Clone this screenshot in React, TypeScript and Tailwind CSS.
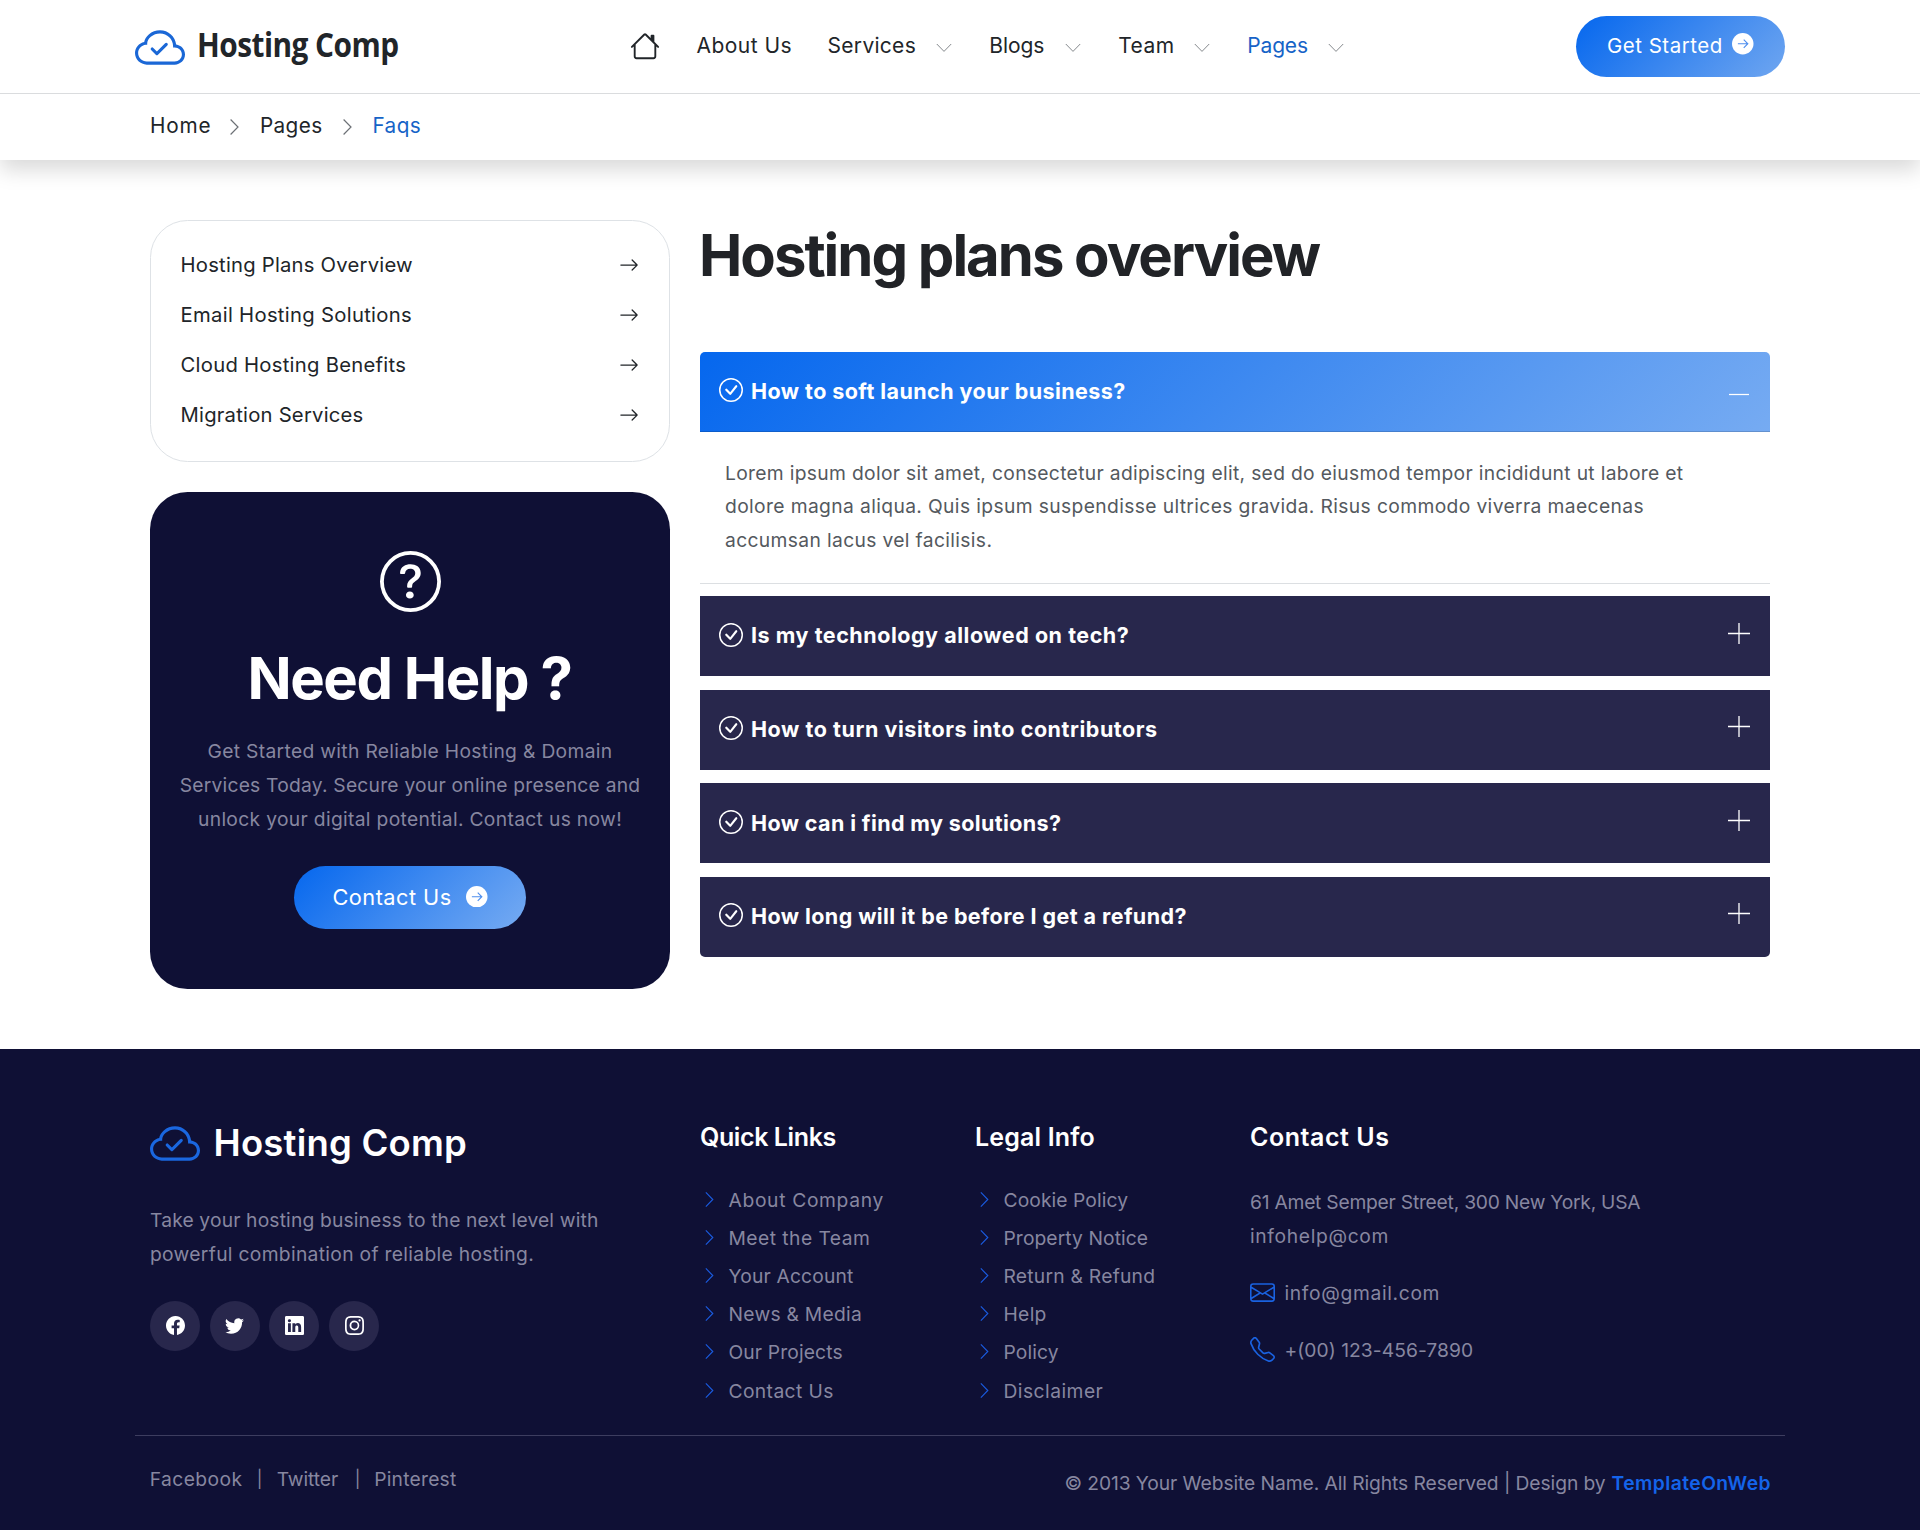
import React from 'react';
import {
  BsArrowRight,
  BsCheckCircle,
  BsCloudCheck,
  BsEnvelope,
  BsFacebook,
  BsHouse,
  BsInstagram,
  BsLinkedin,
  BsQuestionCircle,
  BsTelephone,
  BsTwitter,
} from 'react-icons/bs';

type Label = { text: string; track: string };

function ChevronDown() {
  return (
    <svg className="mt-[3px] h-[18px] w-[18px] shrink-0" viewBox="0 0 18 18" fill="none" stroke="#85898d" strokeWidth="1">
      <path d="M1.8 5 9 12.4 16.2 5" />
    </svg>
  );
}

function ChevronRight({ className }: { className: string }) {
  return (
    <svg className={className} viewBox="0 0 9 16" fill="none" stroke="currentColor" strokeWidth="1.2">
      <path d="M.6.5 8 8 .6 15.5" />
    </svg>
  );
}

function ArrowBadge({ className }: { className: string }) {
  return (
    <svg className={`size-[21.5px] shrink-0 ${className}`} viewBox="0 0 22 22" fill="none">
      <circle cx="11" cy="11" r="11" fill="#fff" />
      <path d="M6 11h10M12 6.8l4.2 4.2-4.2 4.2" stroke="#4f8fee" strokeWidth="1.15" />
    </svg>
  );
}

const menus: (Label & { width: string })[] = [
  { text: 'Services', track: 'tracking-[0.28px]', width: 'w-[125.2px] text-[#212529]' },
  { text: 'Blogs', track: 'tracking-[-0.07px]', width: 'w-[92.5px] text-[#212529]' },
  { text: 'Team', track: 'tracking-[0.4px]', width: 'w-[92.5px] text-[#212529]' },
  { text: 'Pages', track: 'tracking-[-0.17px]', width: 'w-[97.5px] text-[#1663c7]' },
];

function Header() {
  return (
    <header className="relative shadow-[0_10px_20px_rgba(0,0,0,0.15)]">
      <div className="flex h-[94px] items-center border-b border-[#dadcde] px-[135px] pb-px">
        <div className="flex w-[495px] items-center">
          <BsCloudCheck className="mt-[6px] size-[50px] text-[#1a67d6]" />
          <span className="mb-[4px] ml-[11.5px] inline-block origin-left scale-x-[0.877] whitespace-nowrap font-['Open_Sans',sans-serif] text-[34px] leading-[50px] font-bold tracking-[-0.6px] text-[#212529]">
            Hosting Comp
          </span>
        </div>
        <nav className="flex items-center gap-[36.5px] text-[21px]">
          <BsHouse className="mb-px size-[30px] text-[#212529]" />
          <span className="w-[94.6px] whitespace-nowrap tracking-[0.47px] text-[#212529]">About Us</span>
          {menus.map((m) => (
            <span key={m.text} className={`flex items-center justify-between ${m.width}`}>
              <span className={m.track}>{m.text}</span>
              <ChevronDown />
            </span>
          ))}
        </nav>
        <button className="ml-auto flex h-[61px] w-[209px] items-center justify-between rounded-full bg-linear-[135deg,#0567ee,#6fa6f0] pr-[31.5px] pl-[31px] text-[20.5px] text-white">
          <span className="whitespace-nowrap tracking-[0.5px]">Get Started</span>
          <ArrowBadge className="mb-[4px]" />
        </button>
      </div>
      <div className="flex h-[66px] items-center gap-[20.5px] pb-[2px] pl-[149.9px] text-[20.75px] text-[#212529]">
        <span className="w-[60px] tracking-[0.85px]">Home</span>
        <ChevronRight className="mt-[2px] h-4 w-[9px] text-[#6c7075]" />
        <span className="w-[62.5px] tracking-[0.38px]">Pages</span>
        <ChevronRight className="mt-[2px] h-4 w-[9px] text-[#6c7075]" />
        <span className="tracking-[0.42px] text-[#1663c7]">Faqs</span>
      </div>
    </header>
  );
}

const topics: Label[] = [
  { text: 'Hosting Plans Overview', track: 'tracking-[0.22px]' },
  { text: 'Email Hosting Solutions', track: 'tracking-[0.3px]' },
  { text: 'Cloud Hosting Benefits', track: 'tracking-[0.27px]' },
  { text: 'Migration Services', track: 'tracking-[0.22px]' },
];

function Sidebar() {
  return (
    <aside className="flex w-[520px] flex-col gap-[30px]">
      <ul className="flex h-[242px] flex-col rounded-[37.5px] border border-[#dee2e6] pt-[19.5px] pr-[30px] pl-[29.5px] text-[20.25px] text-[#212529]">
        {topics.map((t) => (
          <li key={t.text} className="flex h-[50px] items-center justify-between">
            <span className={t.track}>{t.text}</span>
            <BsArrowRight className="mb-[2px] size-5" />
          </li>
        ))}
      </ul>
      <section className="flex h-[497px] flex-col items-center rounded-[37.5px] bg-[#0f1035] pt-[59px] text-center">
        <BsQuestionCircle className="size-[61px] text-white" />
        <h2 className="mt-[28.5px] pr-px text-[58px] leading-[75px] font-bold tracking-[-1.45px] text-white">Need Help ?</h2>
        <p className="mt-[19.5px] flex flex-col text-[19.25px] leading-[33.75px] whitespace-nowrap text-[#8787a0]">
          <span className="tracking-[0.32px]">Get Started with Reliable Hosting &amp; Domain</span>
          <span className="tracking-[0.22px]">Services Today. Secure your online presence and</span>
          <span className="tracking-[0.32px]">unlock your digital potential. Contact us now!</span>
        </p>
        <button className="mt-[29.5px] flex h-[63px] w-[232px] items-center justify-between rounded-full bg-linear-[135deg,#0567ee,#76abf2] pr-[38.5px] pl-[38.5px] text-[21.75px] text-white">
          <span className="mt-px tracking-[0.46px]">Contact Us</span>
          <ArrowBadge className="mb-[2px]" />
        </button>
      </section>
    </aside>
  );
}

const answer: Label[] = [
  {
    text: 'Lorem ipsum dolor sit amet, consectetur adipiscing elit, sed do eiusmod tempor incididunt ut labore et',
    track: 'tracking-[0.32px]',
  },
  {
    text: 'dolore magna aliqua. Quis ipsum suspendisse ultrices gravida. Risus commodo viverra maecenas',
    track: 'tracking-[0.37px]',
  },
  { text: 'accumsan lacus vel facilisis.', track: 'tracking-[0.35px]' },
];

const questions: Label[] = [
  { text: 'Is my technology allowed on tech?', track: 'tracking-[0.53px]' },
  { text: 'How to turn visitors into contributors', track: 'tracking-[0.55px]' },
  { text: 'How can i find my solutions?', track: 'tracking-[0.38px]' },
  { text: 'How long will it be before I get a refund?', track: 'tracking-[0.42px]' },
];

function Accordion() {
  return (
    <div className="mt-[62px] text-[21.5px] font-bold text-white">
      <div className="flex h-[80px] items-center rounded-t-[5px] border-b border-black/15 bg-linear-[135deg,#0567ee,#76abf2] bg-origin-border pr-[20px] pb-px pl-[18.5px]">
        <BsCheckCircle className="mb-[2px] size-6" />
        <span className="ml-[8.5px] tracking-[0.43px]">How to soft launch your business?</span>
        <svg className="mt-[5px] ml-auto size-[22px]" viewBox="0 0 22 22" stroke="currentColor" strokeWidth="1.25">
          <path d="M1 11.5h20" />
        </svg>
      </div>
      <div className="flex h-[151.5px] flex-col border-b border-[#dcdfe2] pt-[24.5px] pl-[25px] text-[19.25px] leading-[33.75px] font-normal whitespace-nowrap text-[#54595e]">
        {answer.map((l) => (
          <span key={l.text} className={l.track}>
            {l.text}
          </span>
        ))}
      </div>
      <div className="mt-[12.5px] flex flex-col gap-[13.65px]">
        {questions.map((q) => (
          <div key={q.text} className="flex h-[80px] items-center bg-[#28274c] pr-[20px] pb-px pl-[18.5px] last:rounded-b-[5px]">
            <BsCheckCircle className="mb-[2px] size-6" />
            <span className={`ml-[8.5px] ${q.track}`}>{q.text}</span>
            <svg className="mb-[4px] ml-auto size-[22px]" viewBox="0 0 22 22" stroke="currentColor" strokeWidth="1.3">
              <path d="M0 10.5h22M11 0v21" />
            </svg>
          </div>
        ))}
      </div>
    </div>
  );
}

const quickLinks: Label[] = [
  { text: 'About Company', track: 'tracking-[0.66px]' },
  { text: 'Meet the Team', track: 'tracking-[0.45px]' },
  { text: 'Your Account', track: 'tracking-[0.16px]' },
  { text: 'News & Media', track: 'tracking-[0.26px]' },
  { text: 'Our Projects', track: 'tracking-[0.13px]' },
  { text: 'Contact Us', track: 'tracking-[0.38px]' },
];

const legalLinks: Label[] = [
  { text: 'Cookie Policy', track: 'tracking-[0.08px]' },
  { text: 'Property Notice', track: 'tracking-[0.08px]' },
  { text: 'Return & Refund', track: 'tracking-[0.24px]' },
  { text: 'Help', track: 'tracking-[0.3px]' },
  { text: 'Policy', track: 'tracking-[0.12px]' },
  { text: 'Disclaimer', track: 'tracking-[0.46px]' },
];

function LinkColumn({ title, titleTrack, links }: { title: string; titleTrack: string; links: Label[] }) {
  return (
    <div>
      <h3 className={`text-[25px] leading-[35px] font-semibold text-white ${titleTrack}`}>{title}</h3>
      <ul className="mt-[25.5px]">
        {links.map((l) => (
          <li key={l.text} className="flex h-[38.2px] items-center pl-[5px]">
            <ChevronRight className="mb-px h-[15px] w-[9px] text-[#1a5be0]" />
            <span className={`mt-px ml-[14.5px] ${l.track}`}>{l.text}</span>
          </li>
        ))}
      </ul>
    </div>
  );
}

const socials = [BsFacebook, BsTwitter, BsLinkedin, BsInstagram];

function Footer() {
  return (
    <footer className="mt-[60px] h-[481px] bg-[#0f1035] px-[135px] pt-[71px] text-[19.25px] text-[#8787a0]">
      <div className="grid h-[315.5px] grid-cols-[550px_275px_275px_1fr] border-b border-[#3d3d5f] pl-[15px]">
        <div>
          <div className="flex h-[50px] items-center">
            <BsCloudCheck className="size-[50px] text-[#1a67e0]" />
            <span className="mb-[3px] ml-[13.5px] text-[36.5px] font-semibold tracking-[0.2px] text-white">Hosting Comp</span>
          </div>
          <p className="mt-[34px] flex flex-col leading-[33.75px]">
            <span className="tracking-[0.15px]">Take your hosting business to the next level with</span>
            <span className="tracking-[0.31px]">powerful combination of reliable hosting.</span>
          </p>
          <div className="mt-[29.5px] flex gap-[9.7px]">
            {socials.map((Icon, i) => (
              <span key={i} className="flex size-[50px] items-center justify-center rounded-full bg-[#28274c] pb-[2px] text-white">
                <Icon className="size-[19px]" />
              </span>
            ))}
          </div>
        </div>
        <LinkColumn title="Quick Links" titleTrack="tracking-[-0.4px]" links={quickLinks} />
        <LinkColumn title="Legal Info" titleTrack="tracking-[0.17px]" links={legalLinks} />
        <div className="whitespace-nowrap">
          <h3 className="text-[25px] leading-[35px] font-semibold tracking-[0.55px] text-white">Contact Us</h3>
          <p className="mt-[31px] flex flex-col leading-[33.75px]">
            <span className="tracking-[-0.24px]">61 Amet Semper Street, 300 New York, USA</span>
            <span className="tracking-[0.65px]">infohelp@com</span>
          </p>
          <div className="mt-[22px] flex h-[34px] items-center">
            <BsEnvelope className="size-[25px] text-[#1a62e0]" />
            <span className="mt-px ml-[9.5px] tracking-[0.65px]">info@gmail.com</span>
          </div>
          <div className="mt-[23px] flex h-[34px] items-center">
            <BsTelephone className="mb-px size-[25px] text-[#1a62e0]" />
            <span className="mt-px ml-[9.5px] tracking-[0.04px]">+(00) 123-456-7890</span>
          </div>
        </div>
      </div>
      <div className="flex justify-between pr-[15px] pl-[14.7px] leading-[34px]">
        <div className="flex pt-[26px]">
          <span className="w-[104px] tracking-[0.42px]">Facebook</span>
          <span className="w-[23px] pl-[3px] text-[17px]">|</span>
          <span className="w-[75px] tracking-[-0.08px]">Twitter</span>
          <span className="w-[22.5px] pl-[3px] text-[17px]">|</span>
          <span className="tracking-[0.23px]">Pinterest</span>
        </div>
        <div className="flex pt-[30px]">
          <span className="tracking-[-0.08px]">© 2013 Your Website Name. All Rights Reserved | Design by</span>
          <span className="-mr-px ml-[6px] font-semibold tracking-[0.44px] text-[#1464ea]">TemplateOnWeb</span>
        </div>
      </div>
    </footer>
  );
}

export default function App() {
  return (
    <div className="h-[1530px] w-[1920px] overflow-hidden bg-white font-['Inter',sans-serif]">
      <Header />
      <main className="flex gap-[30px] pt-[60px] pl-[150px]">
        <Sidebar />
        <section className="w-[1070px]">
          <h1 className="-ml-px text-[58px] leading-[70px] font-bold tracking-[-2px] text-[#212327]">Hosting plans overview</h1>
          <Accordion />
        </section>
      </main>
      <Footer />
    </div>
  );
}
